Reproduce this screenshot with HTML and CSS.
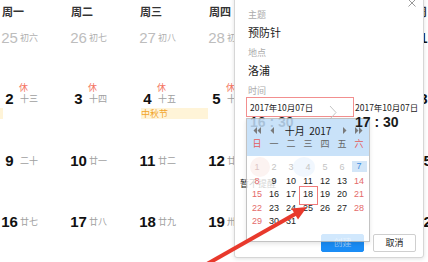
FILE: index.html
```html
<!DOCTYPE html>
<html lang="zh-CN">
<head>
<meta charset="utf-8">
<title>日历</title>
<link rel="stylesheet" href="styles.css">
</head>
<body>
<div class="page">
  <div class="cal">
    <div class="cal-head">
      <div class="wd">周一</div><div class="wd">周二</div><div class="wd">周三</div><div class="wd">周四</div><div class="wd">周五</div><div class="wd">周六</div><div class="wd">周日</div>
    </div>
    <div class="cal-body">
      <div class="cell other"><div class="mark"></div><div class="dline"><span class="num">25</span><span class="lunar">初六</span></div></div>
      <div class="cell other"><div class="mark"></div><div class="dline"><span class="num">26</span><span class="lunar">初七</span></div></div>
      <div class="cell other"><div class="mark"></div><div class="dline"><span class="num">27</span><span class="lunar">初八</span></div></div>
      <div class="cell other"><div class="mark"></div><div class="dline"><span class="num">28</span><span class="lunar">初九</span></div></div>
      <div class="cell other"><div class="mark"></div><div class="dline"><span class="num">29</span><span class="lunar">初十</span></div></div>
      <div class="cell other"><div class="mark"></div><div class="dline"><span class="num">30</span><span class="lunar">十一</span></div></div>
      <div class="cell"><div class="mark">休</div><div class="dline"><span class="num">1</span><span class="lunar">国庆节</span></div></div>

      <div class="cell"><div class="mark">休</div><div class="dline"><span class="num">2</span><span class="lunar">十三</span></div><div class="event tail"></div></div>
      <div class="cell"><div class="mark">休</div><div class="dline"><span class="num">3</span><span class="lunar">十四</span></div></div>
      <div class="cell"><div class="mark">休</div><div class="dline"><span class="num">4</span><span class="lunar">十五</span></div><div class="event">中秋节</div></div>
      <div class="cell"><div class="mark">休</div><div class="dline"><span class="num">5</span><span class="lunar">十六</span></div></div>
      <div class="cell"><div class="mark">休</div><div class="dline"><span class="num">6</span><span class="lunar">十七</span></div></div>
      <div class="cell"><div class="mark">休</div><div class="dline"><span class="num">7</span><span class="lunar">十八</span></div></div>
      <div class="cell"><div class="mark">休</div><div class="dline"><span class="num">8</span><span class="lunar">十九</span></div></div>

      <div class="cell"><div class="mark"></div><div class="dline"><span class="num">9</span><span class="lunar">二十</span></div></div>
      <div class="cell"><div class="mark"></div><div class="dline"><span class="num">10</span><span class="lunar">廿一</span></div></div>
      <div class="cell"><div class="mark"></div><div class="dline"><span class="num">11</span><span class="lunar">廿二</span></div></div>
      <div class="cell"><div class="mark"></div><div class="dline"><span class="num">12</span><span class="lunar">廿三</span></div></div>
      <div class="cell"><div class="mark"></div><div class="dline"><span class="num">13</span><span class="lunar">廿四</span></div></div>
      <div class="cell"><div class="mark"></div><div class="dline"><span class="num">14</span><span class="lunar">廿五</span></div></div>
      <div class="cell"><div class="mark"></div><div class="dline"><span class="num">15</span><span class="lunar">廿六</span></div></div>

      <div class="cell"><div class="mark"></div><div class="dline"><span class="num">16</span><span class="lunar">廿七</span></div></div>
      <div class="cell"><div class="mark"></div><div class="dline"><span class="num">17</span><span class="lunar">廿八</span></div></div>
      <div class="cell"><div class="mark"></div><div class="dline"><span class="num">18</span><span class="lunar">廿九</span></div></div>
      <div class="cell"><div class="mark"></div><div class="dline"><span class="num">19</span><span class="lunar">卅</span></div></div>
      <div class="cell"><div class="mark"></div><div class="dline"><span class="num">20</span><span class="lunar">九月</span></div></div>
      <div class="cell"><div class="mark"></div><div class="dline"><span class="num">21</span><span class="lunar">初二</span></div></div>
      <div class="cell"><div class="mark"></div><div class="dline"><span class="num">22</span><span class="lunar">初三</span></div></div>
    </div>
  </div>

  <div class="popover">
    <span class="close"><svg width="8" height="8" viewBox="0 0 8 8"><path d="M0.5 0.5L7.5 7.5M7.5 0.5L0.5 7.5" stroke="#9a9a9a" stroke-width="1" fill="none"/></svg></span>
    <div class="f-label">主题</div>
    <div class="f-value">预防针</div>
    <div class="f-label">地点</div>
    <div class="f-value">洛浦</div>
    <div class="f-label">时间</div>
    <div class="time-row">
      <div class="time-field start">
        <div class="date-box"><span>2017年10月07日</span><svg class="chev" width="8" height="14" viewBox="0 0 8 14"><path d="M1 1L7 7.5L1 14" stroke="#c4c4c4" stroke-width="1" fill="none"/></svg></div>
        <div class="clock">16 : 30</div>
        <div class="picker">
          <div class="picker-head">
            <div class="nav">
              <span class="nav-btn"><svg width="8" height="7" viewBox="0 0 8 7"><path d="M4 0L0.5 3.5L4 7ZM8 0L4.5 3.5L8 7Z" fill="#7a7a7a"/></svg></span>
              <span class="nav-btn prev"><svg width="4" height="7" viewBox="0 0 4 7"><path d="M4 0L0.5 3.5L4 7Z" fill="#7a7a7a"/></svg></span>
              <span class="nav-title">十月&nbsp;&nbsp;2017</span>
              <span class="nav-btn next"><svg width="4" height="7" viewBox="0 0 4 7"><path d="M0 0L3.5 3.5L0 7Z" fill="#7a7a7a"/></svg></span>
              <span class="nav-btn"><svg width="8" height="7" viewBox="0 0 8 7"><path d="M0 0L3.5 3.5L0 7ZM4 0L7.5 3.5L4 7Z" fill="#7a7a7a"/></svg></span>
            </div>
            <div class="weekdays">
              <span class="we">日</span><span>一</span><span>二</span><span>三</span><span>四</span><span>五</span><span class="we">六</span>
            </div>
          </div>
          <div class="days">
            <span class="d off we">1</span><span class="d off">2</span><span class="d off">3</span><span class="d off">4</span><span class="d off">5</span><span class="d off">6</span><span class="d today"><b>7</b></span>
            <span class="d we">8</span><span class="d">9</span><span class="d">10</span><span class="d">11</span><span class="d">12</span><span class="d">13</span><span class="d we">14</span>
            <span class="d we">15</span><span class="d">16</span><span class="d">17</span><span class="d sel">18</span><span class="d">19</span><span class="d">20</span><span class="d we">21</span>
            <span class="d we">22</span><span class="d">23</span><span class="d">24</span><span class="d">25</span><span class="d">26</span><span class="d">27</span><span class="d we">28</span>
            <span class="d we">29</span><span class="d">30</span><span class="d">31</span>
          </div>
        </div>
      </div>
      <div class="time-field end">
        <div class="date-plain">2017年10月07日</div>
        <div class="clock">17 : 30</div>
      </div>
    </div>
    <div class="attendees"><span class="avatar pink"></span><span class="avatar blue"></span></div>
    <div class="remind">暂不提醒</div>
    <div class="actions">
      <button class="btn primary">创建</button>
      <button class="btn">取消</button>
    </div>
  </div>

  <svg class="arrow" width="428" height="262" viewBox="0 0 428 262">
    <line x1="200" y1="268" x2="297" y2="213" stroke="#e8392c" stroke-width="4"/>
    <polygon points="307,207 291.5,208.5 298,219.5" fill="#e8392c"/>
  </svg>
</div>
</body>
</html>
```

FILE: styles.css
```css
* { box-sizing: border-box; }
html, body { margin: 0; padding: 0; background: #fff; }
body {
  font-family: "Noto Sans CJK SC", "Liberation Sans", sans-serif;
  color: #222;
}
.page {
  position: relative;
  width: 428px;
  height: 262px;
  overflow: hidden;
  background: #fff;
}

/* background month calendar */
.cal { width: 483px; }
.cal-head {
  display: grid;
  grid-template-columns: repeat(7, 69px);
  height: 22px;
}
.wd {
  padding-left: 2px;
  font-size: 11px;
  line-height: 22px;
  font-weight: 700;
  color: #333;
}
.cal-body {
  display: grid;
  grid-template-columns: repeat(7, 69px);
  grid-auto-rows: 61.33px;
}
.cell { overflow: visible; }
.mark {
  height: 10px;
  padding-left: 19px;
  font-size: 9px;
  line-height: 10px;
  color: #f47563;
}
.dline {
  display: flex;
  align-items: center;
  height: 12px;
}
.num {
  width: 19px;
  text-align: center;
  font-family: "Liberation Sans", "Noto Sans CJK SC", sans-serif;
  font-size: 15px;
  line-height: 12px;
  font-weight: 700;
  color: #111;
}
.lunar {
  margin-left: 1px;
  font-size: 9px;
  line-height: 12px;
  color: #a0a0a0;
}
.other .num { color: #bdbdbd; font-weight: 400; }
.other .lunar { color: #b0b0b0; }
.event {
  margin-top: 3px;
  margin-left: 3px;
  width: 67px;
  height: 11px;
  background: #fff4d8;
  color: #f2a52a;
  font-size: 9px;
  line-height: 11px;
}
.event.tail { margin-left: 0; width: 3px; }

/* event popover */
.popover {
  position: absolute;
  left: 234px;
  top: -10px;
  width: 190px;
  height: 268px;
  display: flex;
  flex-direction: column;
  padding: 18px 7px 5px 13px;
  background: #fff;
  border: 1px solid #d6d6d6;
  border-radius: 3px;
  box-shadow: 0 1px 4px rgba(0, 0, 0, 0.12);
}
.close {
  position: absolute;
  top: 7.5px;
  right: 7.5px;
  width: 8px;
  height: 8px;
  display: flex;
}
.f-label {
  font-size: 9px;
  line-height: 12px;
  color: #ababab;
}
.f-value {
  margin-top: 4px;
  margin-bottom: 8px;
  font-size: 11px;
  line-height: 14px;
  color: #1a1a1a;
}
.time-row {
  display: flex;
  margin-left: -2px;
}
.time-field { position: relative; white-space: nowrap; }
.time-field.start { width: 108px; flex: none; }
.time-field.end { z-index: 3; flex: none; }
.date-box {
  height: 20px;
  display: flex;
  align-items: center;
  justify-content: space-between;
  padding: 0 16px 0 3px;
  border: 1px solid #f28f8f;
  font-size: 8.5px;
  line-height: 18px;
  color: #222;
}
.chev { margin-top: 10px; }
.date-plain {
  height: 20px;
  padding-left: 1px;
  font-size: 8.5px;
  line-height: 20px;
  color: #222;
}
.clock {
  font-family: "Liberation Sans", "Noto Sans CJK SC", sans-serif;
  font-size: 14px;
  line-height: 11px;
  font-weight: 700;
  color: #1a1a1a;
  white-space: pre;
}
.start .clock { padding-left: 4px; }
.end .clock { padding-left: 1px; }

/* date picker dropdown */
.picker {
  position: absolute;
  left: 0;
  top: 21px;
  width: 124px;
  height: 124px;
  display: flex;
  flex-direction: column;
  border: 1px solid rgba(185, 185, 185, 0.85);
  box-shadow: 0 2px 4px rgba(0, 0, 0, 0.1);
  z-index: 2;
}
.picker-head {
  padding: 5px 1.5px 6px;
  background: rgba(192, 221, 248, 0.86);
}
.nav, .weekdays, .days {
  display: grid;
  grid-template-columns: repeat(7, 17px);
}
.nav { height: 13px; align-items: center; }
.nav-btn { display: flex; justify-content: center; align-items: center; height: 13px; }
.nav-btn.prev { padding-right: 5px; }
.nav-btn.next { padding-left: 6px; }
.nav-title {
  grid-column: span 3;
  text-align: center;
  font-size: 10px;
  line-height: 13px;
  color: #1a1a1a;
}
.weekdays span {
  text-align: center;
  font-size: 9px;
  line-height: 13px;
  color: #666;
}
.weekdays .we { color: #e45b5b; }
.days {
  flex: 1;
  align-content: start;
  padding: 4.2px 1.5px 0;
  grid-auto-rows: 13.6px;
  background: rgba(255, 255, 255, 0.8);
}
.d {
  position: relative;
  display: flex;
  align-items: center;
  justify-content: center;
  font-family: "Liberation Sans", "Noto Sans CJK SC", sans-serif;
  font-size: 9px;
  color: #1c1c1c;
}
.d.we { color: #e46a6a; }
.d.off { color: #c4c4c4; }
.d.off.we { color: #dcc4c4; }
.d.today b {
  display: block;
  width: 15px;
  height: 11px;
  line-height: 11px;
  text-align: center;
  font-weight: 400;
  background: #d3e6f8;
  color: #3b8de0;
}
.d.sel::after {
  content: "";
  position: absolute;
  left: -0.5px;
  top: -1.7px;
  width: 17px;
  height: 17px;
  border: 1px solid #f07a7a;
}

/* content under the picker */
.attendees {
  display: flex;
  gap: 23px;
  margin-top: 29px;
  padding-left: 2px;
}
.avatar {
  width: 20px;
  height: 20px;
  border-radius: 50%;
}
.avatar.pink { background: #eec2b8; }
.avatar.blue { width: 22px; background: #b8d8f8; }
.remind {
  margin-top: 1px;
  margin-left: -8px;
  font-size: 9px;
  line-height: 12px;
  color: #222;
}
.actions {
  margin-top: auto;
  display: flex;
  justify-content: flex-end;
  gap: 9px;
}
.btn {
  width: 43px;
  height: 18px;
  padding: 0;
  border: 1px solid #cfcfcf;
  border-radius: 2px;
  background: #fff;
  font-family: "Noto Sans CJK SC", sans-serif;
  font-size: 9px;
  line-height: 16px;
  color: #222;
}
.btn.primary {
  border-color: #1a8cf5;
  background: #1a8cf5;
  color: rgba(255, 255, 255, 0.55);
}

.arrow {
  position: absolute;
  left: 0;
  top: 0;
  pointer-events: none;
  z-index: 5;
}
```
